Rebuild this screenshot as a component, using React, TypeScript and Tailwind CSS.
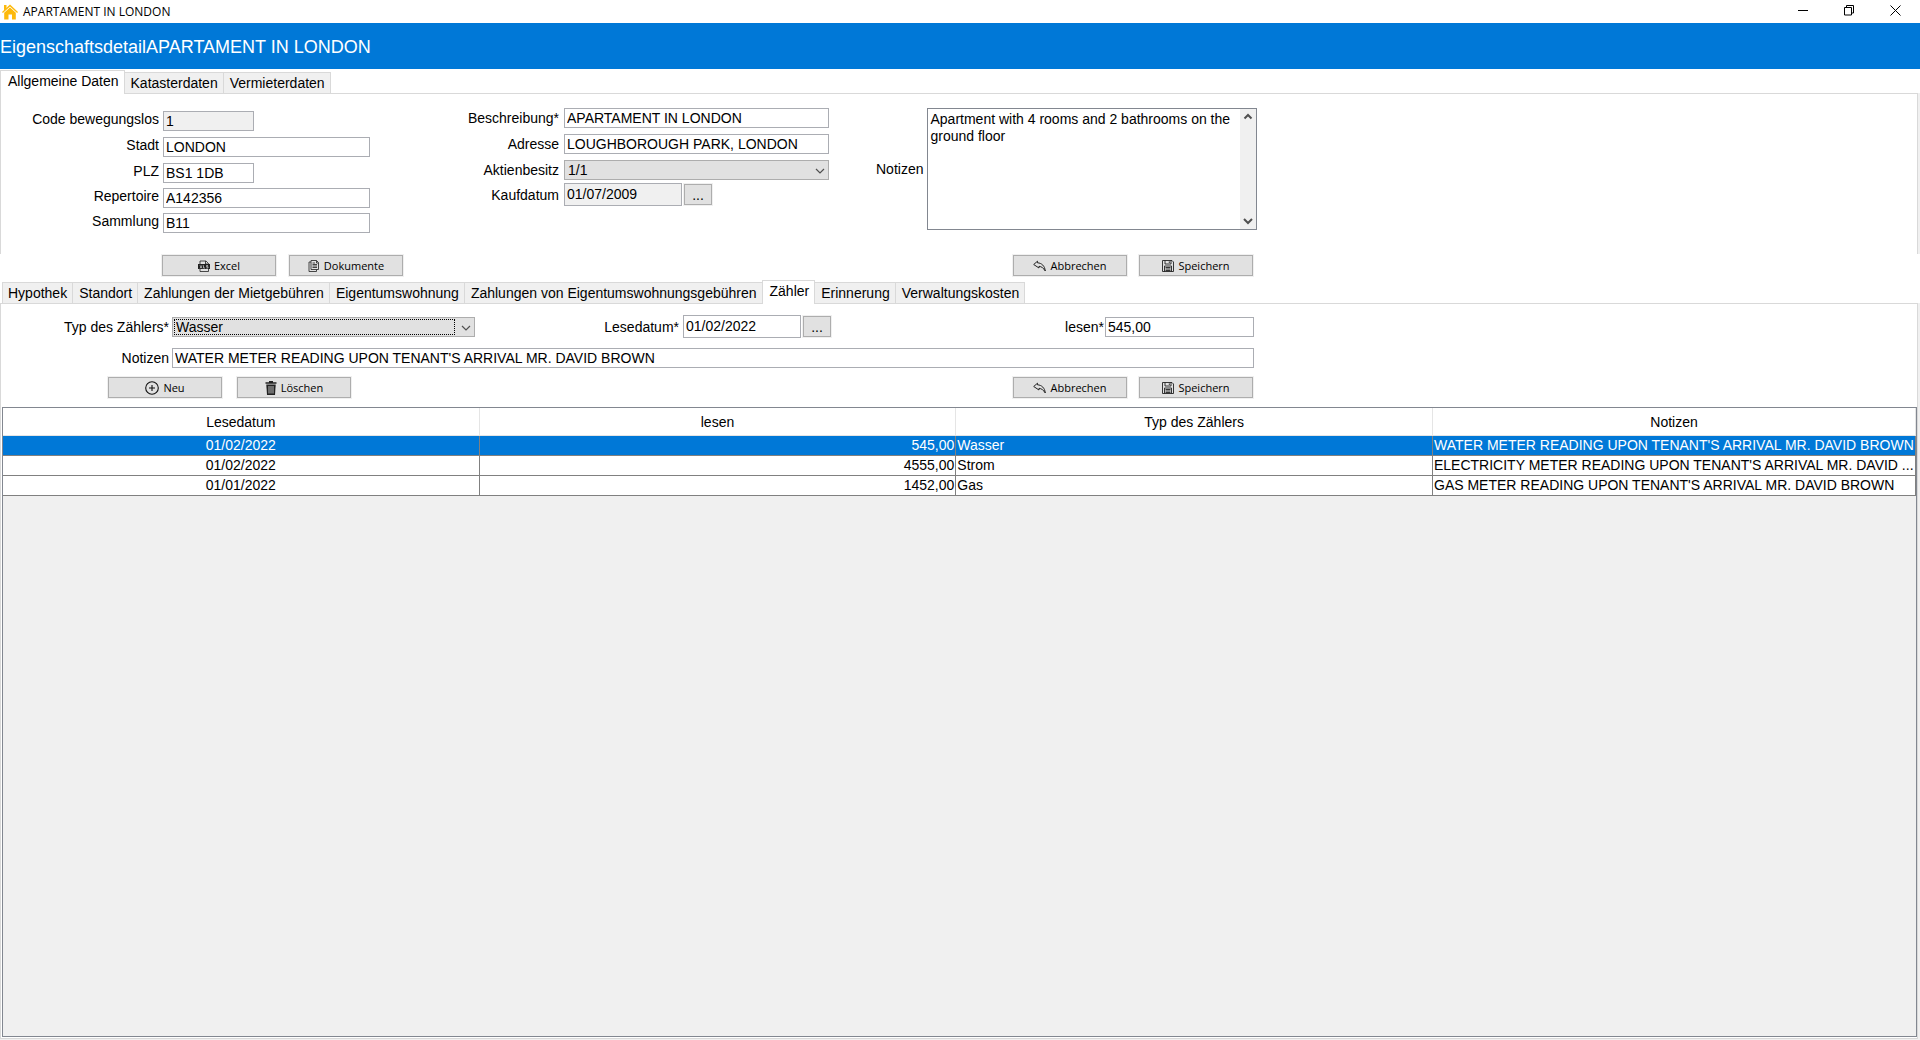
import React from 'react';

const labelText = 'text-right text-sm leading-5 whitespace-nowrap';
const fieldBox = 'h-5 border border-[#abadb3] px-0.5 text-sm leading-4 outline-none';

interface ToolButtonProps {
  label: string;
  icon: React.ReactNode;
}

const ToolButton: React.FC<ToolButtonProps> = ({ label, icon }) => (
  <button
    type="button"
    className="flex h-[21px] w-[114px] items-center justify-center gap-1 border border-[#adadad] bg-[#e1e1e1] font-['Open_Sans',sans-serif] text-[11px] leading-4 ring-1 ring-[#f0f0f0]"
  >
    {icon}
    <span>{label}</span>
  </button>
);

const DateButton: React.FC<{ label: string }> = ({ label }) => (
  <button
    type="button"
    aria-label={label}
    className="h-[21px] w-7 border border-[#adadad] bg-[#e1e1e1] text-sm leading-4 ring-1 ring-[#f0f0f0]"
  >
    ...
  </button>
);

const HomeIcon = () => (
  <svg className="h-4 w-4" viewBox="0 0 16 16" fill="#fdb90a">
    <path d="M2 1h2.5v3.2L2 6.4z" />
    <path d="M8 .6 16 8l-.9.9L8 2.6.9 8.9 0 8z" />
    <path d="M8 3.6 13.8 8.7V15.5H10V10.5H6.5V15.5H2.2V8.7z" />
  </svg>
);

const ExcelIcon = () => (
  <svg className="h-3 w-3" viewBox="0 0 12 12" fill="none" stroke="#222">
    <path d="M2 4V1h6l2.5 2.5V4M2 9v2.5h8.5V9" strokeWidth=".8" />
    <path d="M7.5 1v3h3" strokeWidth=".8" />
    <rect x=".5" y="4.5" width="11" height="4" fill="#222" />
    <path d="M2 5.3 4 8.2M4 5.3 2 8.2M5.5 5.3v2.700h1.500M10 5.500H8.500v1.200H10v1.300H8.300" stroke="#ddd" strokeWidth=".7" />
  </svg>
);

const DocumentsIcon = () => (
  <svg className="h-3 w-3" viewBox="0 0 12 12" fill="none" stroke="#333" strokeWidth=".9">
    <path d="M3 .5h5.500l2 2v7H3z" />
    <path d="M8.500.5V3h2M3 2H1v9.500h7.500v-2" />
    <path d="M4.500 4.500H9M4.500 6H9M4.500 7.500H9M4.500 3H7" />
  </svg>
);

const UndoIcon = () => (
  <svg className="h-3 w-[13px]" viewBox="0 0 13 12" fill="none" stroke="#222" strokeWidth="1" strokeLinejoin="round">
    <path d="M.7 4.500 4.500 1.200v1.600c4.200.2 7.300 3.200 7.800 8.200C10.500 8 8.500 6.600 6 6.300L6 8z" />
  </svg>
);

const SaveIcon = () => (
  <svg className="h-3 w-3" viewBox="0 0 12 12" fill="none" stroke="#222" strokeWidth=".9">
    <path d="M.5.5h9.500l1.500 1.500v9.500H.5z" />
    <path d="M3 .5v3.500h6V.5M7.300 1.300v1.700M2.500 11.500V6h7v5.500" />
    <path d="M3.500 7.500h5M3.500 9h5M3.500 10.500h5" />
  </svg>
);

const PlusIcon = () => (
  <svg className="h-[14px] w-[14px]" viewBox="0 0 14 14" fill="none" stroke="#111" strokeWidth="1.1">
    <circle cx="7" cy="7" r="6.3" />
    <path d="M7 4v6M4 7h6" />
  </svg>
);

const TrashIcon = () => (
  <svg className="h-[14px] w-3" viewBox="0 0 12 14" fill="#222">
    <path d="M4 0h4v1.200h3.500v1.600H.5V1.200H4z" />
    <path d="M1.300 3.600h9.400L10 14H2z" />
    <path d="M4 5v7.500M6 5v7.500M8 5v7.500" stroke="#e1e1e1" strokeWidth=".8" />
  </svg>
);

const Chevron: React.FC<{ up?: boolean; bold?: boolean }> = ({ up, bold }) => (
  <svg className="h-2 w-[10px]" viewBox="0 0 10 8" fill="none" stroke="#505050" strokeWidth={bold ? 2 : 1.2}>
    <path d={up ? 'M1.5 5.5 5 2l3.5 3.5' : 'M1 2l4 4 4-4'} />
  </svg>
);

interface TabsProps {
  items: string[];
  active: string;
  className?: string;
}

const Tabs: React.FC<TabsProps> = ({ items, active, className }) => (
  <div role="tablist" className={`relative z-10 -mb-px flex items-end ${className ?? ''}`}>
    {items.map((item, i) =>
      item === active ? (
        <button
          key={item}
          type="button"
          role="tab"
          aria-selected="true"
          className="h-6 border-x border-t border-[#d9d9d9] bg-white pr-[5px] pb-[3px] pl-[7px] text-sm leading-5"
        >
          {item}
        </button>
      ) : (
        <button
          key={item}
          type="button"
          role="tab"
          aria-selected="false"
          className={`h-[22px] border-y border-[#d9d9d9] bg-[#f0f0f0] pr-[5px] text-sm leading-5 ${
            i === 0 ? 'border-l pl-[5px]' : 'pl-1.5'
          } ${items[i + 1] === active ? '' : 'border-r'}`}
        >
          {item}
        </button>
      )
    )}
  </div>
);

const leftFields = [
  { id: 'code', label: 'Code bewegungslos', value: '1', box: 'w-[91px] bg-[#f0f0f0]', row: 'h-[26px]', readOnly: true },
  { id: 'city', label: 'Stadt', value: 'LONDON', box: 'w-[207px] bg-white', row: 'h-[26px]' },
  { id: 'zip', label: 'PLZ', value: 'BS1 1DB', box: 'w-[91px] bg-white', row: 'h-[25px]' },
  { id: 'repertoire', label: 'Repertoire', value: 'A142356', box: 'w-[207px] bg-white', row: 'h-[25px]' },
  { id: 'collection', label: 'Sammlung', value: 'B11', box: 'w-[207px] bg-white', row: 'h-[25px]' },
];

// notes are already shortened to the column
const readings = [
  { date: '01/02/2022', value: '545,00', type: 'Wasser', notes: "WATER METER READING UPON TENANT'S ARRIVAL MR. DAVID BROWN" },
  { date: '01/02/2022', value: '4555,00', type: 'Strom', notes: "ELECTRICITY METER READING UPON TENANT'S ARRIVAL MR. DAVID ..." },
  { date: '01/01/2022', value: '1452,00', type: 'Gas', notes: "GAS METER READING UPON TENANT'S ARRIVAL MR. DAVID BROWN" },
];

const TitleBar = () => (
  <header className="flex h-[23px] shrink-0 items-center bg-white pr-0.5 pl-0.5">
    <HomeIcon />
    <span className="ml-[5px] flex-1 font-['Open_Sans',sans-serif] text-xs leading-4">APARTAMENT IN LONDON</span>
    <button type="button" aria-label="Minimieren" className="flex h-full w-[46px] items-center justify-center pb-0.5">
      <svg className="h-[11px] w-[11px]" viewBox="0 0 11 11" stroke="#000">
        <path d="M0 5.5h10" />
      </svg>
    </button>
    <button type="button" aria-label="Wiederherstellen" className="flex h-full w-[46px] items-center justify-center pb-0.5">
      <svg className="h-[11px] w-[11px]" viewBox="0 0 11 11" fill="none" stroke="#000">
        <path d="M.5 2.5h7v7.500h-7zM2.500 2.500V.5h7v7.500H8" />
      </svg>
    </button>
    <button type="button" aria-label="Schließen" className="flex h-full w-[46px] items-center justify-center pb-0.5">
      <svg className="h-[11px] w-[11px]" viewBox="0 0 11 11" stroke="#000">
        <path d="M.5.5l10 10M10.500.5l-10 10" />
      </svg>
    </button>
  </header>
);

const PropertyForm = () => (
  <div className="bg-linear-to-l from-[#f0f0f0] from-[2px] to-white to-[2px] pr-0.5">
    <section className="flex border-x border-t border-[#d9d9d9] bg-white pb-4">
      <div className="pt-[17px]">
        {leftFields.map(f => (
          <div key={f.id} className={`flex items-start gap-1 ${f.row}`}>
            <label htmlFor={f.id} className="w-[158px] text-right text-sm leading-4 whitespace-nowrap">{f.label}</label>
            <input id={f.id} defaultValue={f.value} readOnly={f.readOnly} className={`${fieldBox} ${f.box}`} />
          </div>
        ))}
      </div>

      <div className="ml-[69px] flex flex-col gap-1.5 pt-[14px]">
        <div className="flex gap-[5px]">
          <label htmlFor="description" className={`w-[120px] ${labelText}`}>Beschreibung*</label>
          <input id="description" defaultValue="APARTAMENT IN LONDON" className={`w-[265px] bg-white ${fieldBox}`} />
        </div>
        <div className="flex gap-[5px]">
          <label htmlFor="address" className={`w-[120px] ${labelText}`}>Adresse</label>
          <input id="address" defaultValue="LOUGHBOROUGH PARK, LONDON" className={`w-[265px] bg-white ${fieldBox}`} />
        </div>
        <div className="flex gap-[5px]">
          <label htmlFor="share" className={`w-[120px] ${labelText}`}>Aktienbesitz</label>
          <div className="relative">
            <select id="share" className="block h-5 w-[265px] appearance-none border border-[#adadad] bg-[#e1e1e1] pl-[3px] text-sm leading-4 outline-none">
              <option>1/1</option>
            </select>
            <span className="pointer-events-none absolute top-[7px] right-1"><Chevron /></span>
          </div>
        </div>
        <div className="-mt-[3px] flex items-center">
          <label htmlFor="purchase" className={`mr-[5px] w-[120px] ${labelText}`}>Kaufdatum</label>
          <input id="purchase" readOnly defaultValue="01/07/2009" className="mr-0.5 h-[23px] w-[118px] border border-[#abadb3] bg-[#f0f0f0] px-0.5 pb-0.5 text-sm leading-4 outline-none" />
          <DateButton label="Kaufdatum wählen" />
        </div>
      </div>

      <div className="ml-[47px] flex items-center gap-1 self-start pt-[14px]">
        <label htmlFor="notes" className={labelText}>Notizen</label>
        <div className="flex h-[122px] w-[330px] border border-[#828790] bg-white">
          <textarea
            id="notes"
            className="min-w-0 flex-1 resize-none overflow-hidden px-0.5 py-0.5 text-sm leading-[17px] outline-none"
            defaultValue="Apartment with 4 rooms and 2 bathrooms on the ground floor"
          />
          <div className="flex w-4 flex-col items-center justify-between bg-[#f0f0f0] py-1">
            <button type="button" aria-label="Nach oben" className="flex"><Chevron up bold /></button>
            <button type="button" aria-label="Nach unten" className="flex"><Chevron bold /></button>
          </div>
        </div>
      </div>
    </section>
  </div>
);

const MeterForm = () => (
  <>
    <div className="flex items-center pt-[11px]">
      <label htmlFor="meterType" className={`mr-[3px] w-[168px] ${labelText}`}>Typ des Zählers*</label>
      <div className="relative">
        <select id="meterType" className="block h-5 w-[303px] appearance-none border border-[#adadad] bg-[#e1e1e1] pl-[3px] text-sm leading-4 outline-none">
          <option>Wasser</option>
          <option>Strom</option>
          <option>Gas</option>
        </select>
        <span className="pointer-events-none absolute inset-y-[2px] right-5 left-[2px] border border-dotted border-black" />
        <span className="pointer-events-none absolute top-[7px] right-1"><Chevron /></span>
      </div>
      <label htmlFor="readDate" className={`mr-1 w-[204px] ${labelText}`}>Lesedatum*</label>
      <input id="readDate" defaultValue="01/02/2022" className="mr-0.5 h-[23px] w-[118px] border border-[#abadb3] bg-white px-0.5 pb-0.5 text-sm leading-4 outline-none" />
      <DateButton label="Lesedatum wählen" />
      <label htmlFor="reading" className={`mr-px w-[273px] ${labelText}`}>lesen*</label>
      <input id="reading" defaultValue="545,00" className={`w-[149px] bg-white ${fieldBox}`} />
    </div>
    <div className="mt-[10px] flex">
      <label htmlFor="meterNotes" className={`mr-[3px] w-[168px] ${labelText}`}>Notizen</label>
      <input
        id="meterNotes"
        defaultValue="WATER METER READING UPON TENANT'S ARRIVAL MR. DAVID BROWN"
        className={`w-[1082px] bg-white ${fieldBox}`}
      />
    </div>
    <div className="mt-[9px] flex pl-[107px]">
      <ToolButton label="Neu" icon={<PlusIcon />} />
      <div className="ml-[15px]"><ToolButton label="Löschen" icon={<TrashIcon />} /></div>
      <div className="ml-[662px] flex gap-3">
        <ToolButton label="Abbrechen" icon={<UndoIcon />} />
        <ToolButton label="Speichern" icon={<SaveIcon />} />
      </div>
    </div>
  </>
);

const ReadingsTable = () => (
  <div className="mr-0 mb-px ml-px mt-[9px] flex-1 border border-[#828790] bg-[#f0f0f0]">
    <table className="w-full table-fixed border-separate border-spacing-0 text-sm">
      <colgroup>
        <col />
        <col />
        <col />
        <col className="w-[483px]" />
      </colgroup>
      <thead>
        <tr className="h-7 bg-white">
          {['Lesedatum', 'lesen', 'Typ des Zählers', 'Notizen'].map(h => (
            <th key={h} className="border-r border-b border-[#e5e5e5] p-0 font-normal">{h}</th>
          ))}
        </tr>
      </thead>
      <tbody>
        {readings.map((r, i) => (
          <tr
            key={r.type}
            className={`h-5 leading-[19px] [&>td]:border-r [&>td]:border-b [&>td]:border-[#808080] ${
              i === 0 ? 'bg-[#0078d7] text-white' : 'bg-white'
            }`}
          >
            <td className="p-0 text-center">{r.date}</td>
            <td className="p-0 pr-px text-right">{r.value}</td>
            <td className="p-0 pl-px">{r.type}</td>
            <td className="p-0 pl-px whitespace-nowrap">{r.notes}</td>
          </tr>
        ))}
      </tbody>
    </table>
  </div>
);

export default function App() {
  return (
    <div className="flex min-h-screen flex-col bg-white font-['Liberation_Sans',Arial,sans-serif] text-black">
      <TitleBar />
      <h1 className="flex h-[46px] shrink-0 items-center bg-[#0078d7] pt-0.5 text-lg text-white">
        EigenschaftsdetailAPARTAMENT IN LONDON
      </h1>
      <Tabs
        className="mt-px"
        items={['Allgemeine Daten', 'Katasterdaten', 'Vermieterdaten']}
        active="Allgemeine Daten"
      />
      <PropertyForm />
      <div className="flex pt-px pb-1 pl-[162px]">
        <ToolButton label="Excel" icon={<ExcelIcon />} />
        <div className="ml-[13px]"><ToolButton label="Dokumente" icon={<DocumentsIcon />} /></div>
        <div className="ml-[610px] flex gap-3">
          <ToolButton label="Abbrechen" icon={<UndoIcon />} />
          <ToolButton label="Speichern" icon={<SaveIcon />} />
        </div>
      </div>
      <Tabs
        className="pl-0.5"
        items={[
          'Hypothek',
          'Standort',
          'Zahlungen der Mietgebühren',
          'Eigentumswohnung',
          'Zahlungen von Eigentumswohnungsgebühren',
          'Zähler',
          'Erinnerung',
          'Verwaltungskosten',
        ]}
        active="Zähler"
      />
      <main className="flex flex-1 flex-col bg-[#f0f0f0] pr-0.5 pb-px">
        <div className="flex flex-1 flex-col border border-[#d9d9d9] bg-white">
          <MeterForm />
          <ReadingsTable />
        </div>
      </main>
    </div>
  );
}
